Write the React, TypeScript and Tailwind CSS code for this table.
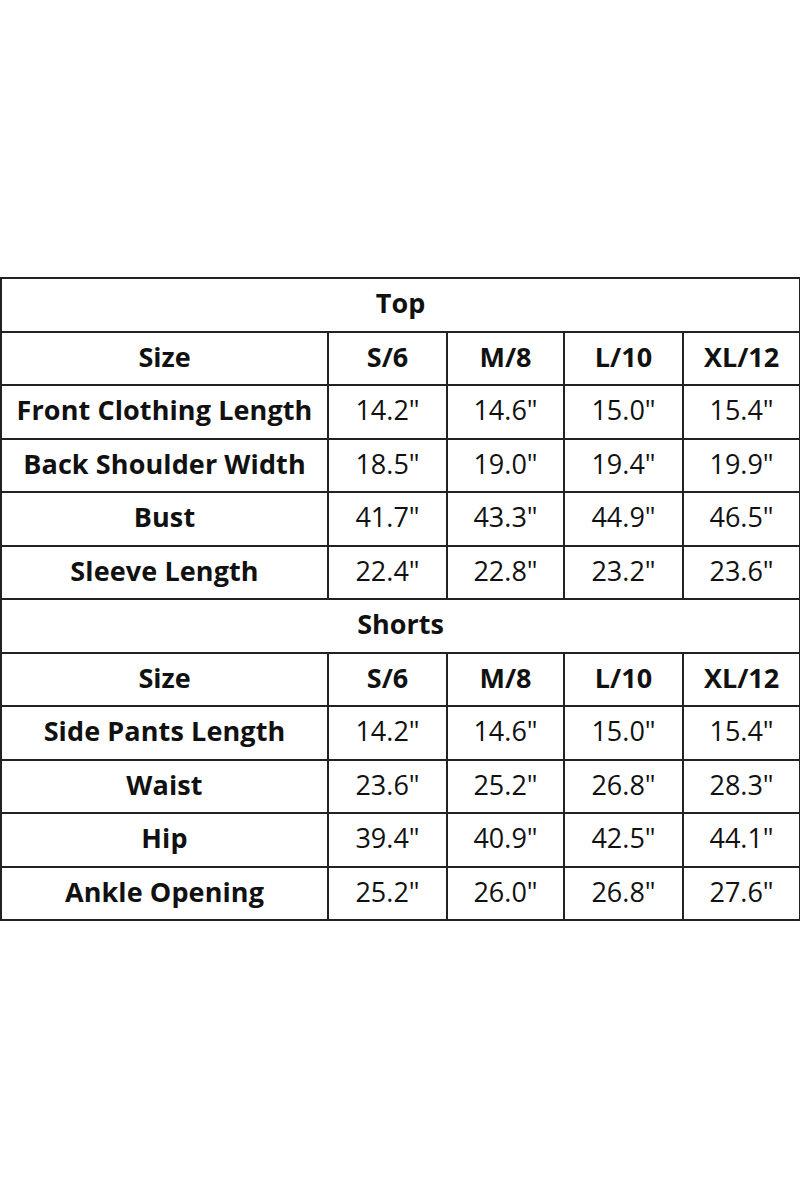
const topRows = [
  ['Front Clothing Length', '14.2"', '14.6"', '15.0"', '15.4"'],
  ['Back Shoulder Width', '18.5"', '19.0"', '19.4"', '19.9"'],
  ['Bust', '41.7"', '43.3"', '44.9"', '46.5"'],
  ['Sleeve Length', '22.4"', '22.8"', '23.2"', '23.6"'],
]

const shortsRows = [
  ['Side Pants Length', '14.2"', '14.6"', '15.0"', '15.4"'],
  ['Waist', '23.6"', '25.2"', '26.8"', '28.3"'],
  ['Hip', '39.4"', '40.9"', '42.5"', '44.1"'],
  ['Ankle Opening', '25.2"', '26.0"', '26.8"', '27.6"'],
]

const sizes = ['S/6', 'M/8', 'L/10', 'XL/12']

const cell = 'border-2 border-[#222] text-center align-middle p-0 pb-[4px]'

function Section({ title, rows }: { title: string; rows: string[][] }) {
  return (
    <>
      <tr className="h-[53.5px]">
        <td colSpan={5} className={`${cell} font-bold`}>
          {title}
        </td>
      </tr>
      <tr className="h-[53.5px]">
        <td className={`${cell} font-bold`}>Size</td>
        {sizes.map((s) => (
          <td key={s} className={`${cell} font-bold`}>
            {s}
          </td>
        ))}
      </tr>
      {rows.map((r) => (
        <tr key={r[0]} className="h-[53.5px]">
          <td className={`${cell} font-bold tracking-[0.1px]`}>{r[0]}</td>
          {r.slice(1).map((v, i) => (
            <td key={i} className={cell}>
              {v}
            </td>
          ))}
        </tr>
      ))}
    </>
  )
}

export default function App() {
  return (
    <div
      className="w-[800px] h-[1200px] bg-white pt-[277px] text-[#111] text-[27px] leading-none"
      style={{ fontFamily: '"Open Sans", "Noto Sans", sans-serif' }}
    >
      <table className="w-[799px] border-collapse table-fixed">
        <colgroup>
          <col className="w-[327px]" />
          <col className="w-[119px]" />
          <col className="w-[117px]" />
          <col className="w-[119px]" />
          <col className="w-[117px]" />
        </colgroup>
        <tbody>
          <Section title="Top" rows={topRows} />
          <Section title="Shorts" rows={shortsRows} />
        </tbody>
      </table>
    </div>
  )
}
